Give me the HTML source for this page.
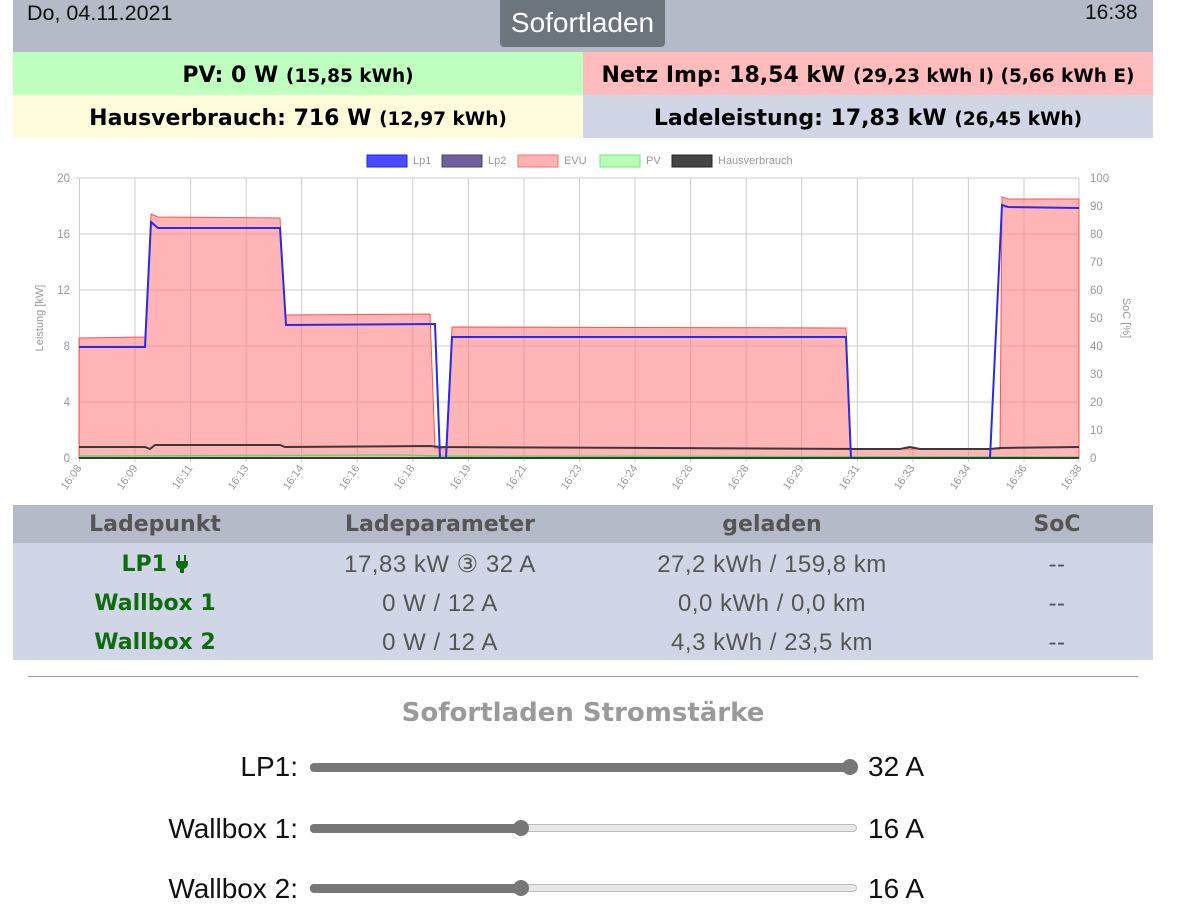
<!DOCTYPE html>
<html><head><meta charset="utf-8"><style>
*{margin:0;padding:0;box-sizing:border-box}
body{width:1186px;height:899px;overflow:hidden;background:#fff;font-family:"Liberation Sans",sans-serif;position:relative}
.a{position:absolute}
.hdr{left:13px;top:0;width:1140px;height:52px;background:#b5bac8}
.cell{position:absolute;height:43px;line-height:48px;text-align:center;font-weight:bold;font-size:22px;color:#000;font-family:"DejaVu Sans",sans-serif}
.cell small{font-size:18.5px}
.th{position:absolute;top:505px;height:38px;line-height:40px;font-weight:bold;font-size:22px;color:#555;text-align:center;width:300px;font-family:"DejaVu Sans",sans-serif}
.td{position:absolute;height:39px;line-height:42px;font-size:24px;letter-spacing:.5px;color:#555;text-align:center;width:300px}
.g{color:#106b10;font-weight:bold;font-family:"DejaVu Sans",sans-serif;font-size:22px;letter-spacing:0}
.lbl{position:absolute;font-size:28px;color:#111;text-align:right;width:290px;left:8px}
.trk{position:absolute;left:310px;width:547px;height:8px;border-radius:4px;background:#e8e8e8;border:1px solid #bbb}
.fill{position:absolute;left:310px;height:9px;border-radius:4px;background:#777}
.th2{position:absolute;width:16px;height:16px;border-radius:8px;background:#777}
.val{position:absolute;left:868px;font-size:28px;color:#111}
</style></head><body>
<div class="a hdr"></div>
<div class="a" style="left:27px;top:1px;font-size:21.5px;color:#111">Do, 04.11.2021</div>
<div class="a" style="left:1085px;top:1px;font-size:21px;color:#111">16:38</div>
<div class="a" style="left:500px;top:0;width:165px;height:47px;background:#6c757d;border-radius:0 0 4px 4px;color:#fff;font-size:28px;line-height:46px;text-align:center">Sofortladen</div>
<div class="cell" style="left:13px;top:52px;width:570px;background:#bfffc0">PV: 0 W <small>(15,85 kWh)</small></div>
<div class="cell" style="left:583px;top:52px;width:570px;background:#ffbcbc">Netz Imp: 18,54 kW <small>(29,23 kWh I) (5,66 kWh E)</small></div>
<div class="cell" style="left:13px;top:95px;width:570px;background:#fffcdc">Hausverbrauch: 716 W <small>(12,97 kWh)</small></div>
<div class="cell" style="left:583px;top:95px;width:570px;background:#d0d6e6">Ladeleistung: 17,83 kW <small>(26,45 kWh)</small></div>

<svg class="a" style="left:0;top:140px" width="1186" height="365" viewBox="0 140 1186 365" font-family="Liberation Sans" font-size="11.5" fill="#999">
<g stroke="#ccc" stroke-width="1">
<line x1="79" y1="178" x2="1079" y2="178"/><line x1="79" y1="234" x2="1079" y2="234"/><line x1="79" y1="290" x2="1079" y2="290"/><line x1="79" y1="346" x2="1079" y2="346"/><line x1="79" y1="402" x2="1079" y2="402"/><line x1="79" y1="458" x2="1079" y2="458"/>
<line x1="79.5" y1="178" x2="79.5" y2="462"/><line x1="135" y1="178" x2="135" y2="462"/><line x1="190.6" y1="178" x2="190.6" y2="462"/><line x1="246.2" y1="178" x2="246.2" y2="462"/><line x1="301.7" y1="178" x2="301.7" y2="462"/><line x1="357.3" y1="178" x2="357.3" y2="462"/><line x1="412.8" y1="178" x2="412.8" y2="462"/><line x1="468.4" y1="178" x2="468.4" y2="462"/><line x1="524" y1="178" x2="524" y2="462"/><line x1="579.5" y1="178" x2="579.5" y2="462"/><line x1="635" y1="178" x2="635" y2="462"/><line x1="690.6" y1="178" x2="690.6" y2="462"/><line x1="746.2" y1="178" x2="746.2" y2="462"/><line x1="801.7" y1="178" x2="801.7" y2="462"/><line x1="857.3" y1="178" x2="857.3" y2="462"/><line x1="912.8" y1="178" x2="912.8" y2="462"/><line x1="968.4" y1="178" x2="968.4" y2="462"/><line x1="1024" y1="178" x2="1024" y2="462"/><line x1="1079" y1="178" x2="1079" y2="462"/>
<line x1="75" y1="178" x2="79" y2="178"/><line x1="75" y1="458" x2="79" y2="458"/>
</g>
<polygon fill="rgba(255,120,120,0.55)" stroke="#ff5050" stroke-width="1" points="79,458 79,338 145,337 151,214 158,217 280,218 285,315 430,314 435,448 446,449 452,327 846,328 851,449 1000,449 1002,197 1008,199 1079,199 1079,458"/>
<polyline fill="none" stroke="#393939" stroke-width="2" points="79,447 145,447 150,449 155,445 280,445 285,447 430,446 440,447 860,449 900,449 910,447 920,449 990,449 1000,448 1079,447"/>
<polyline fill="none" stroke="#5be05b" stroke-width="1.5" points="79,456 400,455 440,456 1079,457"/>
<polyline fill="none" stroke="#2a2aee" stroke-width="2" points="79,347 145,347 151,222 158,228 280,228 286,325 435,324 440,458 446,458 452,337 846,337 851,458 990,458 1002,205 1008,207 1079,208"/>
<line x1="79" y1="458" x2="1079" y2="458" stroke="#2f3f3f" stroke-width="2"/>
<g text-anchor="end"><text x="70" y="182">20</text><text x="70" y="238">16</text><text x="70" y="294">12</text><text x="70" y="350">8</text><text x="70" y="406">4</text><text x="70" y="462">0</text></g>
<g text-anchor="start"><text x="1090" y="182">100</text><text x="1090" y="210">90</text><text x="1090" y="238">80</text><text x="1090" y="266">70</text><text x="1090" y="294">60</text><text x="1090" y="322">50</text><text x="1090" y="350">40</text><text x="1090" y="378">30</text><text x="1090" y="406">20</text><text x="1090" y="434">10</text><text x="1090" y="462">0</text></g>
<text transform="translate(43,318) rotate(-90)" text-anchor="middle" font-size="11">Leistung [kW]</text>
<text transform="translate(1123,318) rotate(90)" text-anchor="middle" font-size="11">SoC [%]</text>
<g font-size="11" text-anchor="end">
<text transform="translate(82,468) rotate(-55)">16:08</text><text transform="translate(138,468) rotate(-55)">16:09</text><text transform="translate(193,468) rotate(-55)">16:11</text><text transform="translate(249,468) rotate(-55)">16:13</text><text transform="translate(304,468) rotate(-55)">16:14</text><text transform="translate(360,468) rotate(-55)">16:16</text><text transform="translate(415,468) rotate(-55)">16:18</text><text transform="translate(471,468) rotate(-55)">16:19</text><text transform="translate(527,468) rotate(-55)">16:21</text><text transform="translate(582,468) rotate(-55)">16:23</text><text transform="translate(638,468) rotate(-55)">16:24</text><text transform="translate(693,468) rotate(-55)">16:26</text><text transform="translate(749,468) rotate(-55)">16:28</text><text transform="translate(804,468) rotate(-55)">16:29</text><text transform="translate(860,468) rotate(-55)">16:31</text><text transform="translate(915,468) rotate(-55)">16:33</text><text transform="translate(971,468) rotate(-55)">16:34</text><text transform="translate(1027,468) rotate(-55)">16:36</text><text transform="translate(1082,468) rotate(-55)">16:38</text>
</g>
<g font-size="11">
<rect x="367" y="155" width="40" height="12" fill="#4a4aff" stroke="#2020ee"/><text x="413" y="164">Lp1</text>
<rect x="442" y="155" width="40" height="12" fill="#6f5f9a" stroke="#4a3c72"/><text x="488" y="164">Lp2</text>
<rect x="518" y="155" width="40" height="12" fill="#ffb3b3" stroke="#ff6f6f"/><text x="564" y="164">EVU</text>
<rect x="600" y="155" width="40" height="12" fill="#b8ffb8" stroke="#7ee07e"/><text x="646" y="164">PV</text>
<rect x="672" y="155" width="40" height="12" fill="#444" stroke="#222"/><text x="718" y="164">Hausverbrauch</text>
</g>
</svg>

<div class="a" style="left:13px;top:505px;width:1140px;height:38px;background:#b5bac8"></div>
<div class="a" style="left:13px;top:543px;width:1140px;height:117px;background:#d0d6e6"></div>
<div class="th" style="left:5px">Ladepunkt</div>
<div class="th" style="left:290px">Ladeparameter</div>
<div class="th" style="left:622px">geladen</div>
<div class="th" style="left:907px">SoC</div>
<div class="td g" style="left:5px;top:544px">LP1 <svg width="14" height="20" viewBox="0 0 14 20" style="vertical-align:-3px"><rect x="3" y="1" width="2" height="6" fill="#106b10"/><rect x="9" y="1" width="2" height="6" fill="#106b10"/><path d="M1 7h12v3a6 6 0 0 1-4 5v4h-4v-4a6 6 0 0 1-4-5z" fill="#106b10"/></svg></div>
<div class="td" style="left:290px;top:544px">17,83 kW ③ 32 A</div>
<div class="td" style="left:622px;top:544px">27,2 kWh / 159,8 km</div>
<div class="td" style="left:907px;top:544px">--</div>
<div class="td g" style="left:5px;top:583px">Wallbox 1</div>
<div class="td" style="left:290px;top:583px">0 W / 12 A</div>
<div class="td" style="left:622px;top:583px">0,0 kWh / 0,0 km</div>
<div class="td" style="left:907px;top:583px">--</div>
<div class="td g" style="left:5px;top:622px">Wallbox 2</div>
<div class="td" style="left:290px;top:622px">0 W / 12 A</div>
<div class="td" style="left:622px;top:622px">4,3 kWh / 23,5 km</div>
<div class="td" style="left:907px;top:622px">--</div>

<div class="a" style="left:28px;top:676px;width:1110px;height:1px;background:#999"></div>
<div class="a" style="left:0;top:698px;width:1166px;text-align:center;font-weight:bold;font-size:26px;color:#9a9a9a;font-family:'DejaVu Sans',sans-serif">Sofortladen Stromstärke</div>

<div class="lbl" style="top:751px">LP1:</div>
<div class="fill" style="top:763px;width:540px"></div>
<div class="th2" style="left:842px;top:759px"></div>
<div class="val" style="top:751px">32 A</div>

<div class="lbl" style="top:813px">Wallbox 1:</div>
<div class="trk" style="top:824px"></div>
<div class="fill" style="top:824px;width:212px"></div>
<div class="th2" style="left:513px;top:820px"></div>
<div class="val" style="top:813px">16 A</div>

<div class="lbl" style="top:873px">Wallbox 2:</div>
<div class="trk" style="top:884px"></div>
<div class="fill" style="top:884px;width:212px"></div>
<div class="th2" style="left:513px;top:880px"></div>
<div class="val" style="top:873px">16 A</div>
</body></html>
